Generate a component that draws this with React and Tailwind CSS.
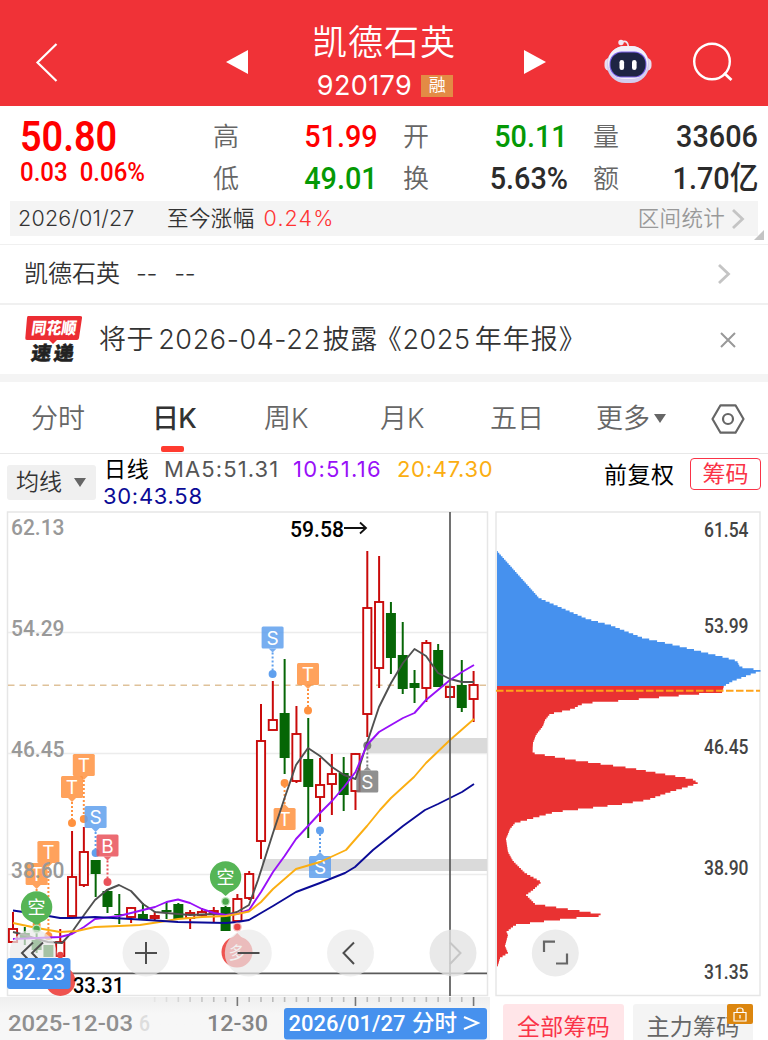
import React from "react";

const FONT = "font-[Inter,'Noto_Sans_CJK_SC',sans-serif]";
const NUM = "font-[Roboto,'Noto_Sans_CJK_SC',sans-serif] font-medium";

// [high, body top, body bottom, low, rising]
const CANDLES = [
  [912, 929, 942, 942, 1],
  [927, 933, 938, 945, 0],
  [926, 940, 950, 953, 0],
  [945, 945, 957, 957, 0],
  [929, 942, 956, 956, 1],
  [831, 877, 916, 916, 1],
  [827, 852, 885, 887, 1],
  [860, 860, 874, 897, 0],
  [889, 891, 907, 913, 0],
  [894, 914, 915, 924, 0],
  [907, 908, 917, 923, 1],
  [903, 914, 919, 919, 0],
  [911, 916, 918, 921, 1],
  [902, 910, 912, 919, 0],
  [903, 904, 919, 919, 0],
  [910, 913, 918, 929, 1],
  [908, 912, 915, 917, 1],
  [907, 911, 913, 922, 1],
  [906, 907, 931, 931, 0],
  [894, 899, 921, 921, 1],
  [871, 874, 898, 900, 1],
  [704, 741, 841, 859, 1],
  [681, 720, 730, 730, 1],
  [659, 713, 758, 774, 0],
  [706, 734, 781, 783, 1],
  [718, 759, 787, 838, 0],
  [758, 785, 797, 822, 1],
  [754, 774, 784, 815, 1],
  [757, 773, 795, 811, 0],
  [753, 754, 791, 810, 1],
  [551, 608, 714, 737, 1],
  [556, 602, 668, 688, 1],
  [602, 613, 658, 674, 0],
  [622, 655, 689, 694, 0],
  [670, 683, 688, 703, 0],
  [640, 643, 688, 702, 1],
  [644, 650, 687, 687, 0],
  [686, 687, 697, 698, 1],
  [660, 685, 708, 712, 0],
  [671, 685, 699, 722, 1],
];

const MA5 =
  "13,932 25,935 37,939 48,942 62,943 72,932 84,915 95,900 107,890 119,885 131,891 143,904 155,912 178,914 190,915 214,914 226,915 237,912 249,905 258,880 273,833 284.6,798 296,765 308,748 320,756 332,767 344,775 355.5,779 367,743 379,707 391,683 403,663 414.5,649 426,656 438,673 450,679 462,682 474,682";
const MA10 =
  "13,939 37,938 60,937 72,934 84,927 95,919 119,916 131,913 143,910 155,907 166.5,902 178,899.5 190,903 202,909 214,913 226,915 237,914 249,910 261,892 273,872 284.6,856 296,839 308,826 320,813 332,801 344,787 355.5,772 367,745 379,732 391,725 403,718 414.5,713 426,700 438,690 450,680 462,672 474,665";
const MA20 =
  "13,923 37,928 60,932 77,931 95,927 119,926 140,925 166,921 178,919 202,917 226,916 237,914 249,911.5 261,902 273,889 296,869 320,862 346,850 367,826 380,810 391,798 414,777 426,763 450,740 474,719";
const MA30 =
  "13,910.5 37,914 60,918 72,918 95,917 131,919 155,920.5 178,922 226,923 237,922 249,920 261,913 273,906 296,892 320,883 345,873 355,867 373,850 403,826 425,810 438,804 450,798 462,792 474,784";

// edge of the chip distribution, top to bottom
const CHIPS = [
  [497, 551], [539, 598], [587, 619], [610, 625], [643, 638], [670, 644], [723, 657],
  [737, 661], [740, 667], [753, 669], [761, 671], [753, 673.5], [733, 681], [724, 686],
  [722, 692.5], [697, 694], [652, 698], [605, 702], [585, 703], [578, 706], [573, 709],
  [550, 714], [545, 720], [543, 726], [536, 735], [533, 743], [532.5, 753], [573, 760],
  [630, 768], [663, 774], [692, 779], [698, 783], [693, 785], [670, 792], [647, 800],
  [623, 804], [590, 808], [555, 812], [523, 821], [515, 823], [510, 829], [506, 839],
  [508, 852], [513, 861], [525, 873], [541.5, 882], [533, 890], [526, 895], [535, 904],
  [557, 907.5], [587, 912], [607, 915.5], [580, 917.5], [547, 921], [515, 925],
  [510, 929], [506.5, 932], [508, 935], [505, 946], [508, 953], [500, 958], [498, 965],
  [497, 967],
];

function chipX(y) {
  for (let i = 1; i < CHIPS.length; i++) {
    const [x0, y0] = CHIPS[i - 1];
    const [x1, y1] = CHIPS[i];
    if (y <= y1) return x0 + ((x1 - x0) * (y - y0)) / (y1 - y0);
  }
  return 497;
}

function chipPath(from, to) {
  const step = 1.75;
  let d = `M497 ${from}`;
  for (let y = from; y < to; y += step) {
    const end = Math.min(y + step, to);
    d += `H${chipX((y + end) / 2).toFixed(1)}V${end}`;
  }
  return d + "H497Z";
}

function Label({ x, y, w, size = 22.5, fill = "#999", weight = 500, children }) {
  return (
    <text
      x={x}
      y={y}
      textLength={w}
      lengthAdjust="spacingAndGlyphs"
      fontSize={size}
      fontWeight={weight}
      fill={fill}
      className="font-[Roboto,sans-serif]"
    >
      {children}
    </text>
  );
}

// letter tag tied to a dot by a dotted stem
function Tag({ x, y, dot, color, letter }) {
  const below = dot < y;
  const edge = below ? y - 11 : y + 11;
  const tip = below ? edge - 4 : edge + 4;
  return (
    <g>
      <line x1={x} x2={x} y1={tip} y2={dot} stroke={color} strokeWidth="2" strokeDasharray="2 2" />
      <circle cx={x} cy={dot} r="4" fill={color} />
      <g opacity="0.85">
        <rect x={x - 11} y={y - 11} width="22" height="22" rx="1.5" fill={color} />
        <path d={`M${x - 4} ${edge}L${x} ${tip}L${x + 4} ${edge}Z`} fill={color} />
      </g>
      <text x={x} y={y + 7} fontSize="19" fill="#fff" textAnchor="middle" className="font-[Inter,sans-serif]">
        {letter}
      </text>
    </g>
  );
}

function KChart() {
  return (
    <svg viewBox="0 511 490 486" className="block h-[486px] w-[490px]">
      <path d="M7.5 512H487.5V995.5H7.5Z" fill="none" stroke="#e6e6e6" strokeWidth="1.5" />
      <path d="M8 632.5H487M8 753.5H487M8 874.5H487" stroke="#ececec" strokeWidth="1.3" />
      <path d="M367 738H487V753H367ZM262 859H487V871H262Z" fill="#dadada" />
      <line x1="8" x2="487" y1="685.3" y2="685.3" stroke="#dfc29a" strokeWidth="1.5" strokeDasharray="6.5 5" />

      {CANDLES.map(([high, top, bottom, low, up], i) => {
        const x = 13 + i * 11.81;
        const color = up ? "#c90a0a" : "#066606";
        return (
          <g key={i} stroke={color} fill={up ? "#fff" : color}>
            <line x1={x} x2={x} y1={high} y2={low} strokeWidth="2" />
            {up ? (
              <rect x={x - 4.1} y={top} width="8.2" height={bottom - top} strokeWidth="1.9" />
            ) : (
              <rect x={x - 5} y={top} width="10" height={bottom - top} stroke="none" />
            )}
          </g>
        );
      })}

      <Tag x={48.4} y={852} dot={936} color="#ff9240" letter="T" />
      <Tag x={36.6} y={874} dot={925} color="#ff9240" letter="T" />
      <Tag x={83.8} y={765} dot={819} color="#ff9240" letter="T" />
      <Tag x={72} y={787} dot={823} color="#ff9240" letter="T" />
      <Tag x={95.6} y={817} dot={853} color="#60a0ee" letter="S" />
      <Tag x={107.5} y={845.5} dot={882} color="#e9525a" letter="B" />
      <Tag x={272.6} y={637.5} dot={674} color="#60a0ee" letter="S" />
      <Tag x={308} y={674} dot={710.5} color="#ff9240" letter="T" />
      <Tag x={284.6} y={819} dot={783} color="#ff9240" letter="T" />
      <Tag x={320} y={867} dot={830.5} color="#60a0ee" letter="S" />
      <Tag x={367.3} y={781.5} dot={745.5} color="#7d7d7d" letter="S" />

      <g fill="none" strokeWidth="1.9" strokeLinejoin="round">
        <polyline points={MA5} stroke="#505050" />
        <polyline points={MA10} stroke="#9810f8" />
        <polyline points={MA20} stroke="#fbae12" />
        <polyline points={MA30} stroke="#0b0b96" />
      </g>

      {[[36.6, 907, 929], [225.6, 877, 901.5]].map(([x, y, dot]) => (
        <g key={x}>
          <path d={`M${x - 8} ${y + 12}L${x} ${y + 19}L${x + 8} ${y + 12}Z`} fill="#56b556" />
          <circle cx={x} cy={y} r="15.7" fill="#56b556" />
          <circle cx={x} cy={dot} r="4.5" fill="#bfe3bf" />
          <circle cx={x} cy={dot} r="3.2" fill="#4aa84a" />
          <text x={x} y={y + 6.5} fontSize="18" fill="#fff" textAnchor="middle" className="font-['Noto_Sans_CJK_SC',sans-serif]">
            空
          </text>
        </g>
      ))}
      <path d="M229 941L237.3 933L245 941Z" fill="#ef5350" />
      <circle cx="237" cy="952" r="15.5" fill="#ef5350" />
      <circle cx="237.3" cy="927" r="4.5" fill="#f7bcbc" />
      <circle cx="237.3" cy="927" r="3.2" fill="#e84444" />
      <text x="237" y="958.5" fontSize="17" fill="#fff" textAnchor="middle" className="font-['Noto_Sans_CJK_SC',sans-serif]">
        多
      </text>
      <circle cx="60.3" cy="955" r="3.2" fill="#e84444" />

      <Label x={11} y={534.5} w={53.5}>62.13</Label>
      <Label x={11} y={636} w={53.5}>54.29</Label>
      <Label x={11} y={757} w={53.5}>46.45</Label>
      <Label x={11} y={878} w={53.5}>38.60</Label>
      <Label x={290} y={536.5} w={54} fill="#000">59.58</Label>
      <path d="M344 528H366M360 522.5L366 528L360 533.5" fill="none" stroke="#111" strokeWidth="1.8" />

      <path d="M8 973.3H487M450 512V996" stroke="#5a5a5a" strokeWidth="1.7" />
      <circle cx="60.3" cy="981" r="15" fill="#ef5350" />
      <g fill="#e9e9e9" fillOpacity="0.7">
        <circle cx="33" cy="953" r="23.5" />
        <circle cx="146" cy="953" r="23.5" />
        <circle cx="248.3" cy="953" r="23.5" />
        <circle cx="350.5" cy="953" r="23.5" />
        <circle cx="453" cy="953" r="23.5" fill="#e4e4e4" fillOpacity="0.8" />
      </g>
      <g fill="none" stroke="#4d4d4d" strokeWidth="2">
        <path d="M33 942.5L22 953L33 964.5M43 942.5L32 953L43 964.5" />
        <path d="M135 953H157M146 942V964M237.5 953H259.5" />
        <path d="M354 942.5L343.5 953L354 964" />
        <path d="M450 942.5L460.5 953L450 964" stroke="#c6c6c6" />
      </g>
      <rect x="7" y="958" width="63.5" height="31" rx="3" fill="#4691ee" />
      <Label x={12} y={980} w={53} fill="#fff">32.23</Label>
      <Label x={73} y={992.5} w={51} fill="#000">33.31</Label>
    </svg>
  );
}

function ChipChart() {
  return (
    <svg viewBox="490 511 278 486" className="block h-[486px] w-[278px]">
      <path d="M496 512H760V995.5H496Z" fill="none" stroke="#e6e6e6" strokeWidth="1.4" />
      <path d={chipPath(551, 686)} fill="#4691ee" />
      <path d={chipPath(686, 967)} fill="#e93232" />
      <line x1="496" x2="760" y1="690.8" y2="690.8" stroke="#ffa31a" strokeWidth="1.9" strokeDasharray="7.5 2.5" />
      <Label x={704} y={537} w={44.5} size={19.5} fill="#444">61.54</Label>
      <Label x={704} y={632.5} w={44.5} size={19.5} fill="#444">53.99</Label>
      <Label x={704} y={754} w={44.5} size={19.5} fill="#444">46.45</Label>
      <Label x={704} y={875} w={44.5} size={19.5} fill="#444">38.90</Label>
      <Label x={704} y={978.5} w={44.5} size={19.5} fill="#444">31.35</Label>
      <circle cx="555.3" cy="953" r="23.5" fill="#ececec" />
      <path d="M544 952V941.7H555M556 963.5H567V953.5" fill="none" stroke="#666" strokeWidth="2.2" />
    </svg>
  );
}

function Robot() {
  return (
    <svg viewBox="0 0 50 46" className="h-[46px] w-[50px]">
      <path d="M18 4.5C23 2 25 4 25.5 9" fill="none" stroke="#f0e6f4" strokeWidth="1.8" />
      <circle cx="18" cy="4.5" r="2.7" fill="#f0e6f4" />
      <rect x="1.5" y="20" width="47" height="13" rx="5" fill="#e9ddf0" />
      <rect x="4" y="8" width="42" height="37" rx="18" fill="#d3cdee" />
      <rect x="5" y="8" width="40" height="33" rx="16.5" fill="#f3f0fa" />
      <rect x="6.500" y="13.500" width="37" height="26" rx="12" fill="#7c62e8" />
      <rect x="7.500" y="14.500" width="35" height="24" rx="11.500" fill="#1e2443" />
      <rect x="16.500" y="22" width="4.600" height="10" rx="2.300" fill="#fff" />
      <rect x="29" y="22" width="4.600" height="10" rx="2.300" fill="#fff" />
    </svg>
  );
}

function Header() {
  return (
    <header className="flex h-[106px] items-start bg-[#f03237] text-white">
      <svg viewBox="0 0 24 42" className="mt-[41px] ml-[35px] h-[42px] w-6" fill="none" stroke="#fff" strokeWidth="2.2">
        <path d="M21.5 3L2.5 21.5L21.5 40" />
      </svg>
      <svg viewBox="0 0 22 24" className="mt-[50px] ml-[167px] h-6 w-[22px]">
        <path d="M0 12L22 0V24Z" fill="#fff" />
      </svg>
      <div className="ml-[52px] flex w-[168px] flex-col items-center">
        <h1 className="mt-[24px] text-[35px] leading-[36px] font-[350] tracking-[1px] whitespace-nowrap">凯德石英</h1>
        <div className="mt-[12px] ml-[2px] flex h-[27px] items-center gap-[9px]">
          <span className="text-[27px] leading-none tracking-[0.4px]">920179</span>
          <span className="flex h-[22px] w-8 items-center justify-center bg-[#e38b45] text-[17px] leading-none">融</span>
        </div>
      </div>
      <svg viewBox="0 0 22 24" className="mt-[50px] ml-[56px] h-6 w-[22px]">
        <path d="M22 12L0 0V24Z" fill="#fff" />
      </svg>
      <div className="mt-[38px] ml-[57px]">
        <Robot />
      </div>
      <svg viewBox="0 0 42 42" className="mt-[41px] ml-[39px] h-[42px] w-[42px]" fill="none" stroke="#fff" strokeWidth="2.4">
        <circle cx="20" cy="20.5" r="17.8" />
        <path d="M32 32L39.500 39" strokeWidth="2.800" />
      </svg>
    </header>
  );
}

function Stat({ label, value, className }) {
  return (
    <div className="flex h-[42px] items-center justify-between">
      <span className="text-[26px] leading-none font-[350] text-[#666]">{label}</span>
      <span className={`${NUM} -mt-[3px] origin-right scale-x-90 text-[32px] leading-none ${className}`}>{value}</span>
    </div>
  );
}

function Quote() {
  return (
    <section className="flex h-[95px] pt-[10px] pl-5">
      <div className="flex w-[193px] flex-col text-[#ff0000]">
        <span className={`${NUM} mt-[1px] origin-left scale-x-90 text-[42px] leading-[40px] font-semibold`}>50.80</span>
        <span className={`${NUM} -mt-[1px] origin-left scale-x-[.925] text-[26px] leading-[32px] whitespace-pre`}>0.03  0.06%</span>
      </div>
      <div className="w-[165px]">
        <Stat label="高" value="51.99" className="text-[#ff0000]" />
        <Stat label="低" value="49.01" className="text-[#059905]" />
      </div>
      <div className="ml-[25px] w-[165px]">
        <Stat label="开" value="50.11" className="text-[#059905]" />
        <Stat label="换" value="5.63%" className="text-[#2b2b2b]" />
      </div>
      <div className="ml-[25px] w-[165px]">
        <Stat label="量" value="33606" className="text-[#2b2b2b]" />
        <Stat label="额" value="1.70亿" className="text-[#2b2b2b]" />
      </div>
    </section>
  );
}

function Chevron({ className }) {
  return (
    <svg viewBox="0 0 14 22" className={`h-[22px] w-[14px] ${className}`} fill="none" stroke="#c4c4c4" strokeWidth="2.8">
      <path d="M2 2L11.5 11L2 20" />
    </svg>
  );
}

function News() {
  return (
    <div className="flex h-[69px] items-center pl-6">
      <svg viewBox="0 0 60 50" className="h-[50px] w-[60px] font-['Noto_Sans_CJK_SC',sans-serif]">
        <path d="M4 1H56Q58.5 1 58 3L55 23Q54.6 25 53 25H33L29 29L25 25H3Q1 25 1.3 23L3 3Q3.2 1 4 1Z" fill="#ec2d33" />
        <g transform="skewX(-8)" fontWeight="900">
          <text x="9.5" y="19" fontSize="16.5" textLength="45" lengthAdjust="spacingAndGlyphs" fill="#fff">同花顺</text>
          <text x="13" y="45.5" fontSize="19" textLength="20" lengthAdjust="spacingAndGlyphs" fill="#222" stroke="#222" strokeWidth="0.5">速</text>
          <text x="35.500" y="45.5" fontSize="19" textLength="20" lengthAdjust="spacingAndGlyphs" fill="#222" stroke="#222" strokeWidth="0.5">递</text>
        </g>
      </svg>
      <p className="ml-[15px] text-[27px] leading-none font-[350] tracking-[0.6px] whitespace-nowrap text-[#333]">
        将于<span className="mr-[2px] ml-[4px]">2026-04-22</span>披露<span className="-ml-[3px]">《</span>2025<span className="ml-[4px] tracking-[1px]">年年报》</span>
      </p>
      <svg viewBox="0 0 16 16" className="mr-8 ml-auto h-4 w-4" fill="none" stroke="#999" strokeWidth="2">
        <path d="M1 1L15 15M15 1L1 15" />
      </svg>
    </div>
  );
}

function Tabs() {
  return (
    <nav className="flex h-[72px] items-center border-b border-[#e8e8e8] pt-[2px] text-[27px] leading-none font-[350] text-[#666]">
      <span className="ml-[31px] w-[121px]">分时</span>
      <span className="relative w-[112px] font-medium tracking-[-0.7px] text-[#333]">
        日K
        <i className="absolute top-[41px] left-[9px] h-[6px] w-[23px] rounded-[2px] bg-[#ff3b30]" />
      </span>
      <span className="w-[116px]">周K</span>
      <span className="w-[110px]">月K</span>
      <span className="w-[106px]">五日</span>
      <span className="flex items-center gap-[4px]">
        更多
        <i className="border-x-[6.5px] border-t-[9px] border-x-transparent border-t-[#666]" />
      </span>
      <svg viewBox="0 0 34 30" className="mr-[23px] ml-auto h-[30px] w-[34px]" fill="none" stroke="#666" strokeWidth="2.2">
        <path d="M9.5 1.3H24.5L32.5 15L24.5 28.7H9.5L1.5 15Z" strokeLinejoin="round" />
        <circle cx="17" cy="15" r="5" />
      </svg>
    </nav>
  );
}

function Indicators() {
  return (
    <div className="flex h-[57px] items-start text-[22px] leading-none">
      <button className="mt-[11px] ml-[7px] flex h-[35px] w-[89px] items-center rounded-[3px] bg-[#f0f0f0] pl-[9px] text-[23px] font-[350] text-[#333]">
        均线
        <i className="ml-[12px] border-x-[6px] border-t-[9px] border-x-transparent border-t-[#666]" />
      </button>
      <div className="ml-[8px] w-[500px] text-[22px] leading-[27px] tracking-[0.7px]">
        <div className="mt-[2px] flex whitespace-nowrap">
          <span className="w-[60px] text-black">日线</span>
          <span className="w-[129px] tracking-[1.1px] text-[#555]">MA5:51.31</span>
          <span className="w-[104px] tracking-[1.3px] text-[#9810f8]">10:51.16</span>
          <span className="text-[#fbae12]">20:47.30</span>
        </div>
        <div className="-ml-[1px] text-[#0b0b96]">30:43.58</div>
      </div>
      <span className="mt-[10px] w-[86px] text-[23px] tracking-[0.5px] text-black">前复权</span>
      <button className="mt-[4px] flex h-[32px] w-[71px] items-center justify-center rounded-[4px] border border-[#fa3347] text-[23px] text-[#fa3347]">
        筹码
      </button>
    </div>
  );
}

function DateAxis() {
  const ticks = Array.from({ length: 28 }, (_, i) => 154.7 + i * 11.81);
  return (
    <div className="h-[43px] w-[490px] bg-gradient-to-b from-[#efefef] to-[#f7f7f7] to-40%">
      <svg viewBox="0 997 490 43" className="block h-[43px] w-[490px]">
        {ticks.map((x, i) => (
          <line
            key={i}
            x1={x}
            x2={x}
            y1="996"
            y2={i % 10 === 7 ? 1006 : 1002}
            stroke={i % 10 === 7 ? "#777" : "#bbb"}
            strokeWidth="1.6"
            strokeOpacity={Math.min(1, 0.2 + i * 0.15)}
          />
        ))}
        <Label x={8} y={1031} w={125} fill="#909090">2025-12-03</Label>
        <Label x={139} y={1031} w={11} fill="#ddd">6</Label>
        <Label x={207} y={1031} w={61} fill="#858585">12-30</Label>
        <rect x="284" y="1008" width="203" height="31.5" rx="3" fill="#4691ee" />
        <Label x={288.5} y={1031} w={117} fill="#fff">2026/01/27</Label>
        <text x="412" y="1031" fontSize="22.5" fontWeight="500" fill="#fff" textLength="45" className="font-['Noto_Sans_CJK_SC',sans-serif]">
          分时
        </text>
        <path d="M464 1017L478 1023L464 1029" fill="none" stroke="#fff" strokeWidth="2" />
      </svg>
    </div>
  );
}

function ChipTabs() {
  return (
    <div className="flex h-[43px] w-[278px] gap-[9px] pt-[7px] pl-[13px] text-[23px] leading-none">
      <button className="flex h-[42px] w-[121px] items-center justify-center rounded-[3px] bg-[#ffe5e8] pt-[4px] tracking-[0.3px] text-[#fa3347]">
        全部筹码
      </button>
      <button className="relative flex h-[42px] w-[120px] items-center justify-center rounded-[3px] bg-[#f4f4f4] pt-[4px] tracking-[0.3px] text-[#666]">
        主力筹码
        <span className="absolute top-0 right-0 flex h-5 w-[26px] items-center justify-center rounded-[2px] bg-[#dc860f]">
          <svg viewBox="0 0 14 15" className="h-[15px] w-[14px]" fill="none" stroke="#fff" strokeWidth="1.2">
            <path d="M1 5.5H13V14H1ZM4 5.5V3Q4 1 7 1Q10 1 10 3V5.5M7 8V11.5" />
          </svg>
        </span>
      </button>
    </div>
  );
}

export default function App() {
  return (
    <div className={`${FONT} h-[1040px] w-[768px] overflow-hidden bg-white`}>
      <Header />
      <Quote />
      <div className="relative h-[43px] px-[10px]">
        <div className="flex h-[35px] items-center bg-[#f4f4f4] pl-2 text-[21.5px] leading-none font-[350] text-[#333]">
          <span className="w-[149px] tracking-[0.2px]">2026/01/27</span>
          <span className="tracking-[0.4px]">至今涨幅</span>
          <span className="ml-[9px] tracking-[1.1px] text-[#ff3333]">0.24%</span>
          <span className="ml-auto tracking-[0.3px] text-[#999]">区间统计</span>
          <Chevron className="mr-[13px] ml-[6px]" />
        </div>
        <i className="absolute right-[4px] bottom-[4px] border-b-[10px] border-l-[10px] border-b-[#c4c4c4] border-l-transparent" />
      </div>
      <div className="flex h-[61px] items-center border-t border-b-2 border-[#f0f0f0] pl-6 text-[24px] leading-none font-[350] text-[#333]">
        <span>凯德石英</span>
        <span className="ml-[16px] tracking-[-0.3px]">--</span>
        <span className="ml-[17px] tracking-[-0.3px]">--</span>
        <Chevron className="mr-[37px] ml-auto" />
      </div>
      <News />
      <div className="h-2 bg-[#f4f4f4]" />
      <Tabs />
      <Indicators />
      <div className="flex">
        <KChart />
        <ChipChart />
      </div>
      <div className="flex">
        <DateAxis />
        <ChipTabs />
      </div>
    </div>
  );
}
